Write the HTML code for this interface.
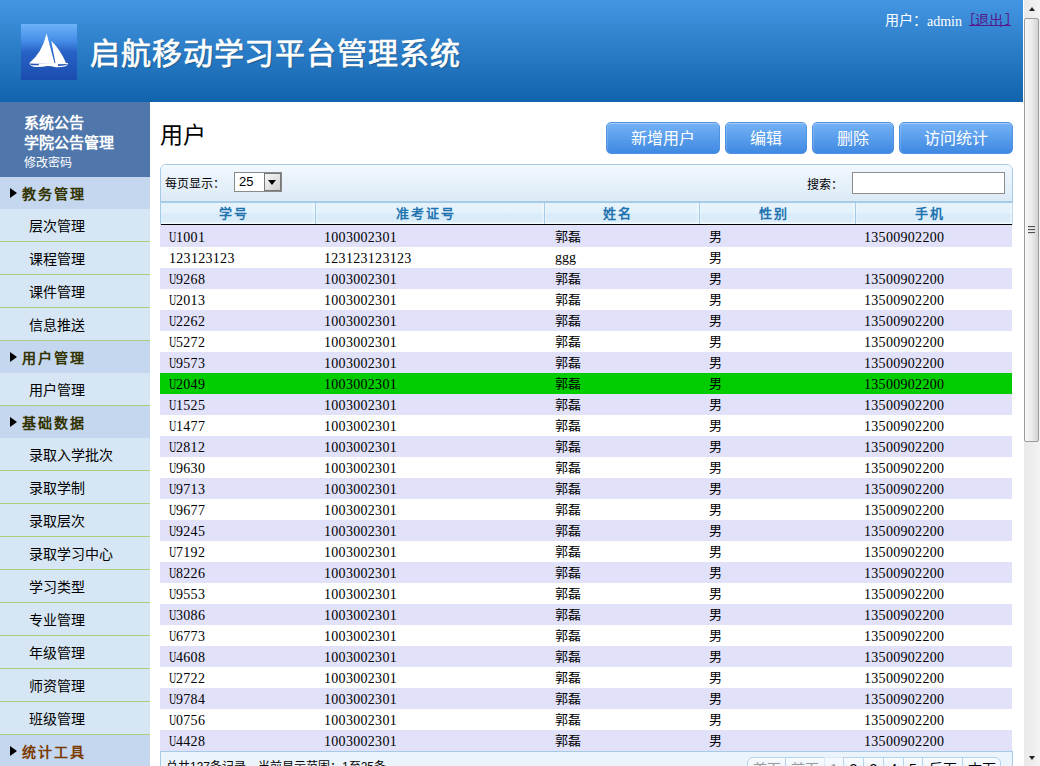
<!DOCTYPE html>
<html lang="zh-CN">
<head>
<meta charset="utf-8">
<style>
*{box-sizing:border-box;margin:0;padding:0}
html,body{width:1040px;height:766px;overflow:hidden;background:#fff;font-family:"Liberation Sans",sans-serif;color:#000}
div,span,b,i{position:absolute;font-style:normal;font-weight:normal;white-space:nowrap}
#hdr{left:0;top:0;width:1023px;height:102px;background:linear-gradient(#4596e2,#1063ac)}
#logo{left:21px;top:24px;width:56px;height:56px;background:linear-gradient(#6cb2f8 0%,#468de8 30%,#2762c6 50%,#1b4caf 100%)}
#logo svg{position:absolute;left:0;top:0}
#title{left:90px;top:29px;font-size:30px;letter-spacing:0.9px;font-weight:normal;-webkit-text-stroke:0.7px #fff;color:#fff;text-shadow:1px 1px 1px rgba(0,0,0,.35)}
#user{left:885px;top:9px;font-size:14px;color:#fff}
#user span span{position:static}
#side{left:0;top:102px;width:150px;height:664px;background:#d6e6f4}
#stop{left:0;top:0;width:150px;height:75px;background:#5077ab;color:#fff}
#stop span{left:24px}
.g{left:0;width:150px;height:32px;background:#c5d7ee}
.g i{left:10px;top:11px;width:0;height:0;border-left:7px solid #000;border-top:5px solid transparent;border-bottom:5px solid transparent}
.g span{left:22px;top:6px;font-size:14px;font-weight:bold;color:#333300;letter-spacing:2px}
.it{left:0;width:150px;height:33px;border-bottom:1px solid #a9cf7e}
.it span{left:29px;top:6px;font-size:14px}
#ptitle{left:160px;top:116px;font-size:23px;font-family:"Liberation Serif",serif}
.btn{top:122px;height:32px;border:1px solid #5092e2;border-radius:5px;background:linear-gradient(#74b2f5,#3f89e2);box-shadow:inset 0 1px 0 rgba(255,255,255,.35),inset 1px 0 0 rgba(255,255,255,.15);color:#fff;font-size:16px;text-align:center;line-height:31px}
#panel{left:160px;top:164px;width:853px;height:61px;border:1px solid #a6cbe6;border-radius:6px 6px 0 0;background:#fff}
#tb{left:0;top:0;width:851px;height:38px;border-radius:5px 5px 0 0;background:linear-gradient(#f2f8fe,#dceaf6);border-bottom:2px solid #a6cbe6}
#thead{left:0;top:38px;width:851px;height:22px;background:linear-gradient(#e7f3fb 0px,#e3f2fc 10px,#d9ebf8 11px,#dcedf9 19px,#f2fbff 20px,#f2fbff 21px);border-bottom:1px solid #000}
.th{top:0;height:21px;border-right:1px solid #a6cbe6;text-align:center;font-size:13px;font-weight:bold;color:#2173b0;line-height:21px;letter-spacing:2px;padding-right:8px;box-shadow:inset -2px 0 0 rgba(255,255,255,.3),1px 0 0 rgba(255,255,255,.3)}
#body{left:160px;top:226px;width:852px;height:526px}
.r{left:0;width:852px;height:21px;background:#fff;font-family:"Liberation Serif",serif;font-size:14px}
.r.o{background:#e1e1fa}
.r.g8{background:#00cc00}
.r b{top:1px;height:21px;line-height:21px;letter-spacing:0.3px}
.r u{display:inline-block;transform:scaleX(0.72);transform-origin:0 0;width:7px;text-decoration:none}
.r.first b{top:2px}
.r .c3,.r .c4{font-size:13px;letter-spacing:0;top:0}
.r.first .c3,.r.first .c4{top:1px}
.c1{left:9px}.c2{left:164px}.c3{left:395px}.c4{left:549px}.c5{left:704px}
#foot{left:160px;top:751px;width:853px;height:30px;border:1px solid #a6cbe6;background:#ecf4fb}
#scroll{left:1023px;top:0;width:17px;height:766px;background:linear-gradient(to right,#fff 0,#fff 1px,#e9e9e9 1px,#eeeeee 60%,#f4f4f4)}
#thumb{left:1px;top:18px;width:15px;height:424px;border:1px solid #9c9c9c;border-radius:2px;background:linear-gradient(to right,#f7f7f7,#ececec 50%,#d3d3d3)}
#pager{left:747px;top:757px;width:254px;height:20px}
.pg{top:0;height:20px;border:1px solid #b4d4ee;background:linear-gradient(#f8fbfe,#e6f0f9);font-size:14px;text-align:center;line-height:18px;padding-top:2px}
.pg.dis{color:#9a9a9a}
.pg.cur{color:#9a9a9a;border-color:#d8e8f4}
</style>
</head>
<body>
<div id="hdr">
  <div id="logo"><svg width="56" height="56" viewBox="0 0 56 56"><path fill="#fff" d="M25.6,9.6 Q21,29 8.4,39 L33.8,40 Z"/><path fill="#fff" d="M30.2,16.8 Q39.5,26 45,39 L34.6,40 Z"/><path fill="#fff" d="M8.2,39.4 L47.2,39 Q46.8,41.6 44.5,42.3 Q39,43.6 34.5,43.2 Q30,41.8 26.5,41.9 Q21,43 15,42.9 Q9.8,42.5 8.2,39.4 Z"/><path fill="#1f52b4" d="M9.6,40.1 L17.8,40 L17.8,41.2 Q13,41.4 9.6,40.9 Z"/><path fill="#1f52b4" d="M37,40.2 L46.8,40 Q45,41.8 37,41.9 Z"/></svg></div>
  <div id="title">启航移动学习平台管理系统</div>
  <div id="user"><span style="left:0;top:0">用户：</span><span style="left:42px;top:5px;font-family:'Liberation Serif',serif;font-size:14px">admin</span><span style="left:84px;top:3px;color:#551a8b;font-family:'Liberation Mono',monospace;font-size:12px">[</span><span style="left:90px;top:0;color:#551a8b">退出</span><span style="left:119px;top:3px;color:#551a8b;font-family:'Liberation Mono',monospace;font-size:12px">]</span><i style="left:84px;top:16px;width:42px;height:1px;background:#551a8b"></i></div>
</div>
<div id="side">
  <div id="stop">
    <span style="top:9px;font-size:15px;font-weight:600">系统公告</span>
    <span style="top:29px;font-size:15px;font-weight:600">学院公告管理</span>
    <span style="top:51px;font-size:12px">修改密码</span>
  </div>
  <div class="g" style="top:75px"><i></i><span>教务管理</span></div>
  <div class="it" style="top:107px"><span>层次管理</span></div>
  <div class="it" style="top:140px"><span>课程管理</span></div>
  <div class="it" style="top:173px"><span>课件管理</span></div>
  <div class="it" style="top:206px"><span>信息推送</span></div>
  <div class="g" style="top:239px"><i></i><span>用户管理</span></div>
  <div class="it" style="top:271px"><span>用户管理</span></div>
  <div class="g" style="top:304px"><i></i><span>基础数据</span></div>
  <div class="it" style="top:336px"><span>录取入学批次</span></div>
  <div class="it" style="top:369px"><span>录取学制</span></div>
  <div class="it" style="top:402px"><span>录取层次</span></div>
  <div class="it" style="top:435px"><span>录取学习中心</span></div>
  <div class="it" style="top:468px"><span>学习类型</span></div>
  <div class="it" style="top:501px"><span>专业管理</span></div>
  <div class="it" style="top:534px"><span>年级管理</span></div>
  <div class="it" style="top:567px"><span>师资管理</span></div>
  <div class="it" style="top:600px"><span>班级管理</span></div>
  <div class="g" style="top:633px"><i></i><span style="color:#7a3a00">统计工具</span></div>
</div>
<div id="ptitle">用户</div>
<div class="btn" style="left:606px;width:114px">新增用户</div>
<div class="btn" style="left:725px;width:82px">编辑</div>
<div class="btn" style="left:812px;width:82px">删除</div>
<div class="btn" style="left:899px;width:114px">访问统计</div>
<div id="panel">
  <div id="tb">
    <span style="left:4px;top:9px;font-size:12px">每页显示：</span>
    <div style="left:73px;top:7px;width:48px;height:20px;border:1px solid #8a8a8a;background:#fff">
      <span style="left:4px;top:1px;font-size:13px">25</span>
      <div style="left:29px;top:0;width:17px;height:18px;border:1px solid #777;background:linear-gradient(135deg,#f6f6f6,#d0d0d0)"><i style="left:3px;top:6px;width:0;height:0;border-top:5px solid #000;border-left:4px solid transparent;border-right:4px solid transparent"></i></div>
    </div>
    <span style="left:646px;top:10px;font-size:12px">搜索：</span>
    <div style="left:691px;top:7px;width:153px;height:22px;border:1px solid #8e8e8e;background:#fff"></div>
  </div>
  <div id="thead">
    <div class="th" style="left:0;width:155px">学号</div>
    <div class="th" style="left:155px;width:229px">准考证号</div>
    <div class="th" style="left:384px;width:155px">姓名</div>
    <div class="th" style="left:539px;width:156px">性别</div>
    <div class="th" style="left:695px;width:156px;border-right:0">手机</div>
  </div>
</div>
<div id="body">
<div class="r o first" style="top:-1px;height:22px"><b class="c1"><u>U</u>1001</b><b class="c2">1003002301</b><b class="c3">郭磊</b><b class="c4">男</b><b class="c5">13500902200</b></div>
<div class="r" style="top:21px"><b class="c1">123123123</b><b class="c2">123123123123</b><b class="c3" style="top:0;font-family:'Liberation Serif',serif;font-size:14px">ggg</b><b class="c4">男</b><b class="c5"></b></div>
<div class="r o" style="top:42px"><b class="c1"><u>U</u>9268</b><b class="c2">1003002301</b><b class="c3">郭磊</b><b class="c4">男</b><b class="c5">13500902200</b></div>
<div class="r" style="top:63px"><b class="c1"><u>U</u>2013</b><b class="c2">1003002301</b><b class="c3">郭磊</b><b class="c4">男</b><b class="c5">13500902200</b></div>
<div class="r o" style="top:84px"><b class="c1"><u>U</u>2262</b><b class="c2">1003002301</b><b class="c3">郭磊</b><b class="c4">男</b><b class="c5">13500902200</b></div>
<div class="r" style="top:105px"><b class="c1"><u>U</u>5272</b><b class="c2">1003002301</b><b class="c3">郭磊</b><b class="c4">男</b><b class="c5">13500902200</b></div>
<div class="r o" style="top:126px"><b class="c1"><u>U</u>9573</b><b class="c2">1003002301</b><b class="c3">郭磊</b><b class="c4">男</b><b class="c5">13500902200</b></div>
<div class="r g8" style="top:147px"><b class="c1"><u>U</u>2049</b><b class="c2">1003002301</b><b class="c3">郭磊</b><b class="c4">男</b><b class="c5">13500902200</b></div>
<div class="r o" style="top:168px"><b class="c1"><u>U</u>1525</b><b class="c2">1003002301</b><b class="c3">郭磊</b><b class="c4">男</b><b class="c5">13500902200</b></div>
<div class="r" style="top:189px"><b class="c1"><u>U</u>1477</b><b class="c2">1003002301</b><b class="c3">郭磊</b><b class="c4">男</b><b class="c5">13500902200</b></div>
<div class="r o" style="top:210px"><b class="c1"><u>U</u>2812</b><b class="c2">1003002301</b><b class="c3">郭磊</b><b class="c4">男</b><b class="c5">13500902200</b></div>
<div class="r" style="top:231px"><b class="c1"><u>U</u>9630</b><b class="c2">1003002301</b><b class="c3">郭磊</b><b class="c4">男</b><b class="c5">13500902200</b></div>
<div class="r o" style="top:252px"><b class="c1"><u>U</u>9713</b><b class="c2">1003002301</b><b class="c3">郭磊</b><b class="c4">男</b><b class="c5">13500902200</b></div>
<div class="r" style="top:273px"><b class="c1"><u>U</u>9677</b><b class="c2">1003002301</b><b class="c3">郭磊</b><b class="c4">男</b><b class="c5">13500902200</b></div>
<div class="r o" style="top:294px"><b class="c1"><u>U</u>9245</b><b class="c2">1003002301</b><b class="c3">郭磊</b><b class="c4">男</b><b class="c5">13500902200</b></div>
<div class="r" style="top:315px"><b class="c1"><u>U</u>7192</b><b class="c2">1003002301</b><b class="c3">郭磊</b><b class="c4">男</b><b class="c5">13500902200</b></div>
<div class="r o" style="top:336px"><b class="c1"><u>U</u>8226</b><b class="c2">1003002301</b><b class="c3">郭磊</b><b class="c4">男</b><b class="c5">13500902200</b></div>
<div class="r" style="top:357px"><b class="c1"><u>U</u>9553</b><b class="c2">1003002301</b><b class="c3">郭磊</b><b class="c4">男</b><b class="c5">13500902200</b></div>
<div class="r o" style="top:378px"><b class="c1"><u>U</u>3086</b><b class="c2">1003002301</b><b class="c3">郭磊</b><b class="c4">男</b><b class="c5">13500902200</b></div>
<div class="r" style="top:399px"><b class="c1"><u>U</u>6773</b><b class="c2">1003002301</b><b class="c3">郭磊</b><b class="c4">男</b><b class="c5">13500902200</b></div>
<div class="r o" style="top:420px"><b class="c1"><u>U</u>4608</b><b class="c2">1003002301</b><b class="c3">郭磊</b><b class="c4">男</b><b class="c5">13500902200</b></div>
<div class="r" style="top:441px"><b class="c1"><u>U</u>2722</b><b class="c2">1003002301</b><b class="c3">郭磊</b><b class="c4">男</b><b class="c5">13500902200</b></div>
<div class="r o" style="top:462px"><b class="c1"><u>U</u>9784</b><b class="c2">1003002301</b><b class="c3">郭磊</b><b class="c4">男</b><b class="c5">13500902200</b></div>
<div class="r" style="top:483px"><b class="c1"><u>U</u>0756</b><b class="c2">1003002301</b><b class="c3">郭磊</b><b class="c4">男</b><b class="c5">13500902200</b></div>
<div class="r o" style="top:504px"><b class="c1"><u>U</u>4428</b><b class="c2">1003002301</b><b class="c3">郭磊</b><b class="c4">男</b><b class="c5">13500902200</b></div>
</div>
<div id="foot">
  <span style="left:5px;top:5px;font-size:12px">总共137条记录，当前显示范围：1至25条</span>
</div>
<div id="pager">
  <div class="pg dis" style="left:0;width:39px;border-radius:6px 0 0 0">首页</div>
  <div class="pg dis" style="left:38px;width:40px">前页</div>
  <div class="pg cur" style="left:77px;width:20px">1</div>
  <div class="pg" style="left:96px;width:21px">2</div>
  <div class="pg" style="left:116px;width:21px">3</div>
  <div class="pg" style="left:136px;width:21px">4</div>
  <div class="pg" style="left:156px;width:20px">5</div>
  <div class="pg" style="left:175px;width:41px">后页</div>
  <div class="pg" style="left:215px;width:39px;border-radius:0 6px 0 0">末页</div>
</div>
<div id="scroll">
  <i style="left:6px;top:7px;width:0;height:0;border-bottom:4px solid #222;border-left:3.5px solid transparent;border-right:3.5px solid transparent"></i>
  <div id="thumb"><i style="left:3px;top:207px;width:7px;height:2px;background:linear-gradient(#505050 50%,#d8d8d8 50%)"></i><i style="left:3px;top:210px;width:7px;height:2px;background:linear-gradient(#505050 50%,#d8d8d8 50%)"></i><i style="left:3px;top:213px;width:7px;height:2px;background:linear-gradient(#505050 50%,#d8d8d8 50%)"></i></div>
  <i style="left:6px;top:756px;width:0;height:0;border-top:4px solid #222;border-left:3.5px solid transparent;border-right:3.5px solid transparent"></i>
</div>
</body>
</html>
